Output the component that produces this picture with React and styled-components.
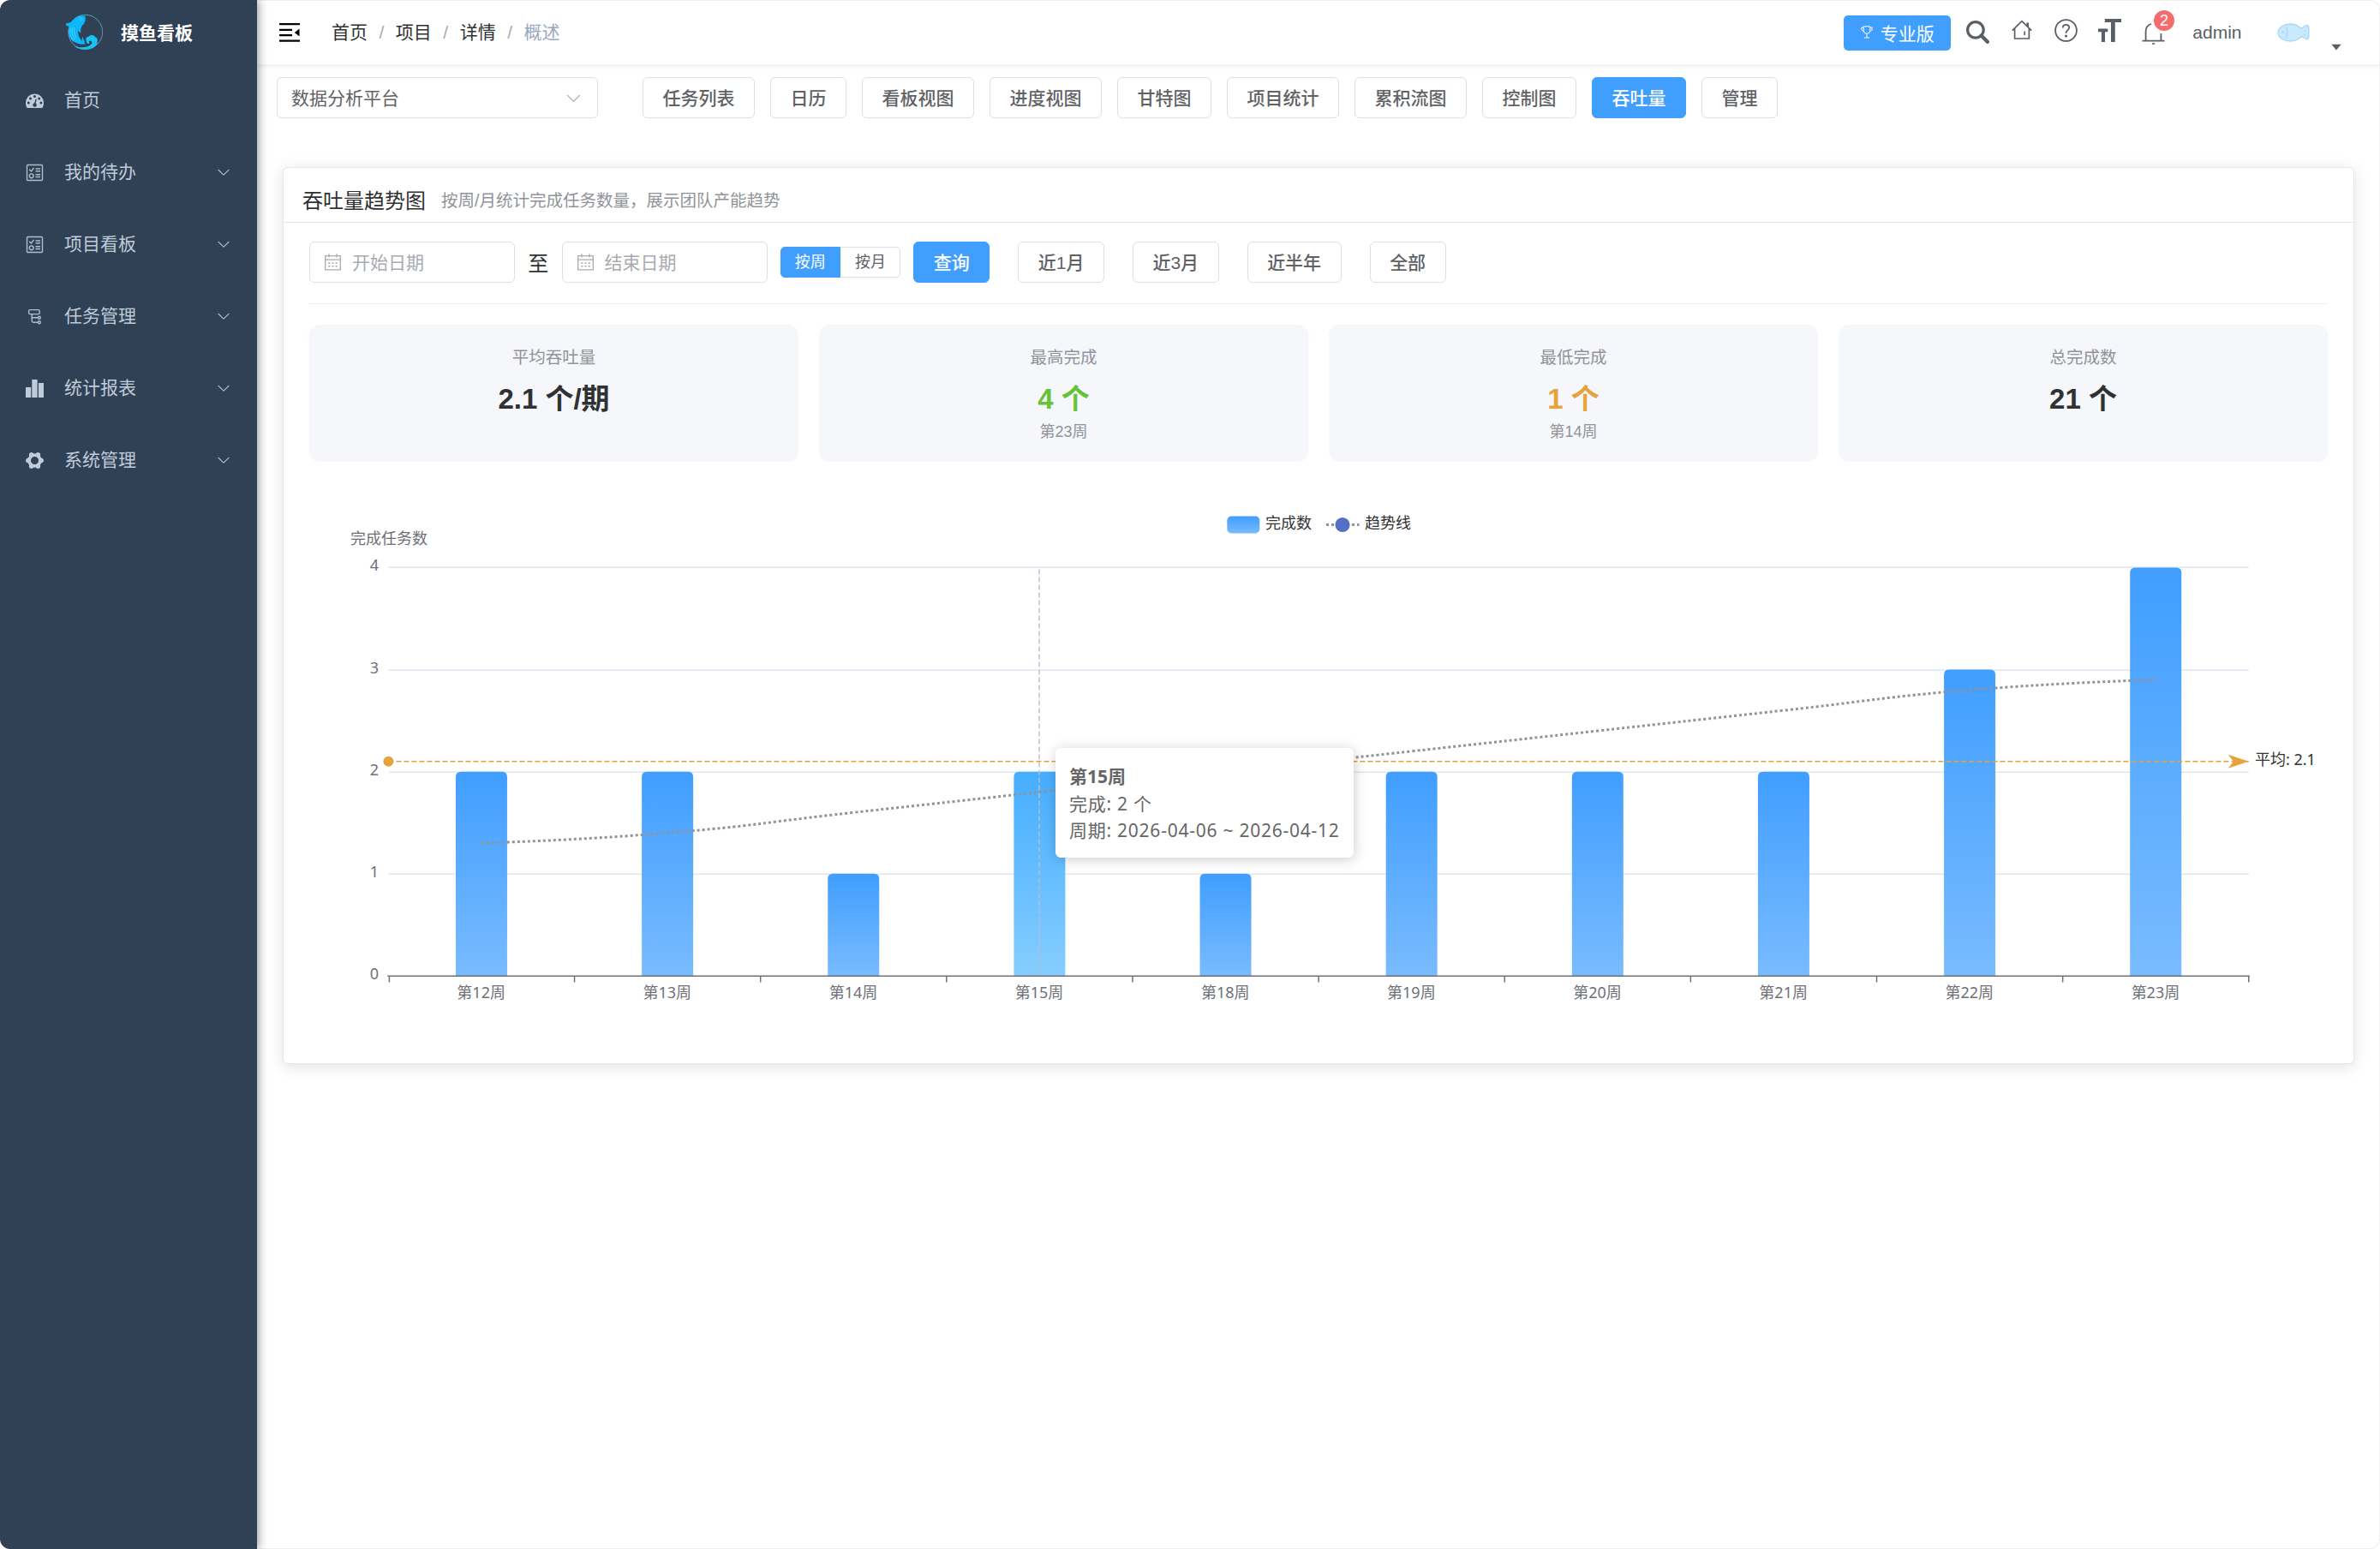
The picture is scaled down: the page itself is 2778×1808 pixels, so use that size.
import React from 'react'
import styled, { createGlobalStyle } from 'styled-components'

const GlobalStyle = createGlobalStyle`
  * {
    box-sizing: border-box;
  }
  body {
    margin: 0;
    background: #fff;
    font-family: "Liberation Sans", "Noto Sans CJK SC", sans-serif;
    font-size: 21px;
    color: #303133;
  }
`

const menus = [
  { name: '首页', icon: 'dashboard' },
  { name: '我的待办', icon: 'todo', children: true },
  { name: '项目看板', icon: 'todo', children: true },
  { name: '任务管理', icon: 'tree', children: true },
  { name: '统计报表', icon: 'chart', children: true },
  { name: '系统管理', icon: 'system', children: true },
]

const crumbs = ['首页', '项目', '详情', '概述']

const views = ['任务列表', '日历', '看板视图', '进度视图', '甘特图', '项目统计', '累积流图', '控制图', '吞吐量', '管理']

const ranges = ['近1月', '近3月', '近半年', '全部']

const stats = [
  { label: '平均吞吐量', value: '2.1 个/期' },
  { label: '最高完成', value: '4 个', sub: '第23周', color: '#67c23a' },
  { label: '最低完成', value: '1 个', sub: '第14周', color: '#e6a23c' },
  { label: '总完成数', value: '21 个' },
]

const weeks = [
  { week: '第12周', count: 2, trend: 1.3 },
  { week: '第13周', count: 2, trend: 1.4 },
  { week: '第14周', count: 1, trend: 1.6 },
  { week: '第15周', count: 2, trend: 1.8 },
  { week: '第18周', count: 1, trend: 2.0 },
  { week: '第19周', count: 2, trend: 2.2 },
  { week: '第20周', count: 2, trend: 2.4 },
  { week: '第21周', count: 2, trend: 2.6 },
  { week: '第22周', count: 3, trend: 2.8 },
  { week: '第23周', count: 4, trend: 2.9 },
]

/* ---------- icons ---------- */

const ArrowDown = ({ size = 18 }) => (
  <svg width={size} height={size} viewBox="0 0 1024 1024" fill="currentColor">
    <path d="M831.872 340.864 512 652.672 192.128 340.864a30.592 30.592 0 0 0-42.752 0 29.12 29.12 0 0 0 0 41.6L489.664 714.24a32 32 0 0 0 44.672 0l340.288-331.712a29.12 29.12 0 0 0 0-41.728 30.592 30.592 0 0 0-42.752 0z" />
  </svg>
)

const gearPath = (() => {
  const pts = []
  for (let i = 0; i < 120; i++) {
    const a = (i / 120) * Math.PI * 2
    const c = Math.cos(6 * a)
    const r = 9.3 + 1.2 * Math.sign(c) * Math.pow(Math.abs(c), 0.6)
    pts.push(`${(10.5 + r * Math.cos(a)).toFixed(2)} ${(10.5 + r * Math.sin(a)).toFixed(2)}`)
  }
  return `M${pts.join('L')}ZM10.5 6a4.5 4.5 0 1 0 0 9a4.5 4.5 0 1 0 0-9Z`
})()

const MenuIcon = ({ name }) => (
  <svg width="21" height="21" viewBox="0 0 21 21" fill="currentColor">
    {name === 'dashboard' && (
      <>
        <path d="M1.6 19C.6 17.300 0 15.200 0 13A10.500 10.500 0 0 1 21 13C21 15.200 20.400 17.300 19.400 19Z" />
        <g fill="#304156">
          <circle cx="3.300" cy="13" r="1.500" />
          <circle cx="5.500" cy="7.900" r="1.500" />
          <circle cx="10.500" cy="5.600" r="1.500" />
          <circle cx="15.700" cy="7.900" r="1.500" />
          <circle cx="17.900" cy="13" r="1.500" />
          <path d="M11.600 8.500L12.800 8.800L11.700 13.500A2.300 2.300 0 1 1 10.200 13.200Z" />
        </g>
      </>
    )}
    {name === 'todo' && (
      <g fill="none" stroke="currentColor" strokeWidth="1.400" opacity=".9">
        <rect x="1.500" y="1.500" width="18" height="18" rx="1" />
        <path d="M4.200 6.800L6.400 9L9.500 5M11.500 6H17M11.500 8.800H17M11.500 12.700H17M11.500 15.500H17" />
        <circle cx="6.700" cy="14.300" r="2.400" />
      </g>
    )}
    {name === 'tree' && (
      <g fill="none" stroke="currentColor" strokeWidth="1.400" opacity=".9">
        <rect x="3.600" y="2.600" width="12.600" height="5" rx="1.600" />
        <path d="M7.200 7.600V15.500Q7.200 17.200 9 17.200H14.200M7.200 11.800H14.200" />
        <circle cx="15.800" cy="11.800" r="1.500" />
        <circle cx="15.800" cy="17.200" r="1.500" />
      </g>
    )}
    {name === 'chart' && <path d="M0 9H6.200V21H0ZM7.300 0H13.600V21H7.300ZM14.900 4H21V21H14.900Z" />}
    {name === 'system' && <path fillRule="evenodd" d={gearPath} />}
  </svg>
)

const FishLogo = () => (
  <svg width="45" height="43" viewBox="228 51 135 129">
    <defs>
      <linearGradient id="ring" x1="0" y1="0" x2="0" y2="1">
        <stop offset="0" stopColor="#4fb0a8" />
        <stop offset=".6" stopColor="#6f8fb8" />
        <stop offset="1" stopColor="#a58fd0" />
      </linearGradient>
    </defs>
    <circle cx="299" cy="115" r="60" fill="none" stroke="url(#ring)" strokeWidth="2.800" />
    <path
      d="M299 60C280 53 262 63 250 80L229 86C233 94 239 97 244 95C236 112 239 136 256 148C270 158 288 160 301 157C286 148 274 134 272 110L283 119C282 108 283 100 287 94C297 85 301 74 299 60Z"
      fill="#0ab7fb"
    />
    <path d="M246 100C243 118 247 134 258 144M253 100C250 116 254 132 264 142M260 100C258 114 261 126 268 136" fill="none" stroke="#7fdcff" strokeWidth="1.800" />
    <circle cx="283" cy="70" r="5.500" fill="none" stroke="#58cdfb" strokeWidth="2" />
    <path d="M290 132C284 142 286 152 297 156C298 150 292 142 290 132Z" fill="#0ab7fb" />
    <path
      d="M258 164C284 172 306 170 318 160C325 154 322 144 314 146C310 148 311 153 314 155C306 158 300 152 302 143C299 137 304 131 310 132C315 124 329 124 333 133C342 136 343 144 340 150C343 157 334 168 320 173C300 180 274 176 258 164Z"
      fill="#17c3f5"
    />
  </svg>
)

const Calendar = () => (
  <svg width="19" height="20" viewBox="0 0 19 20" fill="none" stroke="currentColor" strokeWidth="1.300">
    <path d="M.7 2.700H18.300V18.800H.7ZM.7 7.200H18.300M5 .3V4.600M14 .3V4.600" />
    <path d="M4.200 11H6.400M8.400 11H10.600M12.600 11H14.800M4.200 14.800H6.400M8.400 14.800H10.600M12.600 14.800H14.800" strokeWidth="1.500" />
  </svg>
)

const Hamburger = () => (
  <svg width="24" height="22" viewBox="0 0 24 22" fill="#000">
    <path d="M0 0H24V2.200H0ZM0 6.700H15V8.900H0ZM0 13H15V15.200H0ZM0 19.600H24V21.800H0ZM23.500 6.500V15.500L17.800 11Z" />
  </svg>
)

const Trophy = () => (
  <svg width="14" height="15" viewBox="0 0 14 15" fill="none" stroke="#fff" strokeWidth="1">
    <path d="M3.200 .8H10.800V5.500A3.800 3.800 0 0 1 3.200 5.500ZM3 2.200H.8V4.300Q.8 6 3.400 6.300M11 2.200H13.200V4.300Q13.200 6 10.600 6.300M7 9.500V13.800M3.800 14H10.200" />
  </svg>
)

const SearchIcon = () => (
  <svg width="27" height="27" viewBox="0 0 27 27" fill="none" stroke="#5a5e66">
    <circle cx="10.900" cy="10.900" r="9.300" strokeWidth="3.200" />
    <path d="M17.600 17.600L24.800 24.800" strokeWidth="4.300" strokeLinecap="round" />
  </svg>
)

const HomeIcon = () => (
  <svg width="24" height="24" viewBox="0 0 24 24" fill="none" stroke="#5a5e66" strokeWidth="1.700">
    <path d="M.8 12.600L12 1.600L23.200 12.600M3.600 10.500V22H20.400V10.500M15.200 13.500V18" />
    <path d="M18.700 3.500V8" strokeWidth="2.600" />
  </svg>
)

const QuestionIcon = () => (
  <svg width="27" height="27" viewBox="0 0 27 27" fill="none" stroke="#5a5e66" strokeWidth="1.800">
    <circle cx="13.500" cy="13.500" r="12.400" />
    <path d="M9.800 10.400C9.800 5.700 17.200 5.800 17.200 10.300C17.200 13.200 13.500 13.200 13.500 16.800" />
    <circle cx="13.500" cy="20" r=".7" />
  </svg>
)

const SizeIcon = () => (
  <svg width="27" height="27" viewBox="0 0 27 27" fill="#5a5e66">
    <path d="M7.800 0H27V4H19.800V27H15V4H7.800ZM0 11.500H11.300V15.300H8V27H3.900V15.300H0Z" />
  </svg>
)

const BellIcon = () => (
  <svg width="27" height="27" viewBox="0 0 27 27" fill="none" stroke="#5a5e66" strokeWidth="1.800">
    <path d="M.5 22.600H26.500M4.600 22.600V11.500A9 9 0 0 1 11 3M22.400 22.600V14" />
    <path d="M11.600 25.200H15.400L14.400 27H12.600Z" fill="#5a5e66" stroke="none" />
  </svg>
)

const FishAvatar = () => (
  <svg width="38" height="22" viewBox="0 0 38 22" fill="#c9eafd" stroke="#a9d9f7" strokeWidth="1.400">
    <path d="M1 11C1 5 8 1 15.500 1C21 1 25 3.500 28 6C31 6 31.500 3 34 2.800C37.500 2.500 37 6 36.800 11C37 17 37 19 34.500 18.500C31.500 18.200 31 16 28 16C25 18.700 21 21 15.500 21C8 21 1 17 1 11Z" />
    <path d="M10.500 4.500C12.300 9 12.300 13 10.500 17.500M32 8V10M32 12.500V14.500" fill="none" />
    <circle cx="6.500" cy="10.500" r=".6" />
  </svg>
)

/* ---------- chart ---------- */

const LEFT = 92.4
const RIGHT = 2263.8
const BASE = 576
const STEP = 119.15
const BAND = (RIGHT - LEFT) / weeks.length
const BAR = 60
const ACTIVE = 3

const xOf = (i) => LEFT + BAND * (i + 0.5)
const yOf = (v) => BASE - STEP * v

const smoothLine = () => {
  const p = weeks.map((d, i) => [xOf(i), yOf(d.trend)])
  let d = `M${p[0][0]} ${p[0][1]}`
  let cp = p[0]
  for (let i = 1; i < p.length; i++) {
    const prev = p[i - 1]
    const cur = p[i]
    const next = p[i + 1]
    let inCp = cur
    let outCp = cur
    if (next) {
      const vx = (next[0] - prev[0]) / 4
      const vy = (next[1] - prev[1]) / 4
      inCp = [cur[0] - vx, cur[1] - vy]
      outCp = [cur[0] + vx, cur[1] + vy]
    }
    d += `C${cp[0]} ${cp[1]} ${inCp[0]} ${inCp[1]} ${cur[0]} ${cur[1]}`
    cp = outCp
  }
  return d
}

const barPath = (i, count) => {
  const x = xOf(i) - BAR / 2
  const y = yOf(count)
  return `M${x} ${BASE}V${y + 6}Q${x} ${y} ${x + 6} ${y}H${x + BAR - 6}Q${x + BAR} ${y} ${x + BAR} ${y + 6}V${BASE}Z`
}

const ThroughputChart = () => (
  <ChartBox>
    <ChartSvg width="2356" height="660" viewBox="0 0 2356 660">
      <defs>
        <linearGradient id="bar" x1="0" y1="0" x2="0" y2="1">
          <stop offset="0" stopColor="#409eff" />
          <stop offset="1" stopColor="#79bbff" />
        </linearGradient>
        <linearGradient id="barActive" x1="0" y1="0" x2="0" y2="1">
          <stop offset="0" stopColor="#46adff" />
          <stop offset="1" stopColor="#85cdff" />
        </linearGradient>
      </defs>

      <rect x="1071.300" y="39.500" width="38" height="20" rx="5" fill="url(#bar)" />
      <text x="1116" y="54" fill="#333">完成数</text>
      <path d="M1187 49.500H1225.500" stroke="#909399" strokeWidth="3" strokeDasharray="3 3" />
      <circle cx="1206" cy="49.500" r="8.600" fill="#5470c6" />
      <text x="1232" y="54" fill="#333">趋势线</text>

      <text x="93" y="72" textAnchor="middle" fill="#6e7079">完成任务数</text>
      {[0, 1, 2, 3, 4].map((v) => (
        <g key={v}>
          {v > 0 && <path d={`M${LEFT} ${Math.round(yOf(v)) + 0.25}H${RIGHT}`} stroke="#e0e6f1" strokeWidth="1.500" />}
          <text x="81" y={yOf(v) + 4} textAnchor="end" fill="#6e7079">{v}</text>
        </g>
      ))}

      {weeks.map((d, i) => (
        <path key={d.week} d={barPath(i, d.count)} fill={i === ACTIVE ? 'url(#barActive)' : 'url(#bar)'} />
      ))}

      <path d={`M${LEFT - 1} ${BASE + 0.3}H${RIGHT + 1}`} stroke="#6e7079" strokeWidth="1.500" />
      {Array.from({ length: weeks.length + 1 }, (_, i) => (
        <path key={i} d={`M${LEFT + BAND * i + (i === 0 ? 1 : 0)} ${BASE}v7.500`} stroke="#6e7079" strokeWidth="1.500" />
      ))}
      {weeks.map((d, i) => (
        <text key={d.week} x={xOf(i) - 0.3} y="602" textAnchor="middle" fill="#6e7079">{d.week}</text>
      ))}

      <path d={smoothLine()} fill="none" stroke="#909399" strokeWidth="3" strokeDasharray="3 3" />

      <path d={`M${LEFT} 325.750H${RIGHT}`} stroke="#e6a23c" strokeWidth="1.500" strokeDasharray="6 3" />
      <circle cx={LEFT} cy={yOf(2.1)} r="6" fill="#e6a23c" />
      <path d={`M${RIGHT} ${yOf(2.1)}l-24 -8l6 8l-6 8Z`} fill="#e6a23c" />
      <text x="2271" y="329.500" fill="#333">平均: 2.1</text>

      <path d={`M${Math.round(xOf(ACTIVE))} ${yOf(4) + 2}V${BASE}`} stroke="#b9bec9" strokeOpacity=".7" strokeWidth="2" strokeDasharray="6 3" />
    </ChartSvg>
    <Tooltip>
      <b>第15周</b>
      <span>完成: 2 个</span>
      <span>周期: 2026-04-06 ~ 2026-04-12</span>
    </Tooltip>
  </ChartBox>
)

/* ---------- page ---------- */

function App() {
  return (
    <Page>
      <GlobalStyle />
      <Sidebar>
        <Brand>
          <FishLogo />
          <span>摸鱼看板</span>
        </Brand>
        {menus.map((m) => (
          <MenuItem key={m.name}>
            <MenuIcon name={m.icon} />
            <span>{m.name}</span>
            {m.children && <ArrowDown />}
          </MenuItem>
        ))}
      </Sidebar>

      <Main>
        <Header>
          <Hamburger />
          <Breadcrumb>
            {crumbs.map((c, i) => (
              <React.Fragment key={c}>
                {i > 0 && <i>/</i>}
                <Crumb $last={i === crumbs.length - 1}>{c}</Crumb>
              </React.Fragment>
            ))}
          </Breadcrumb>
          <ProButton><Trophy />专业版</ProButton>
          <Tools>
            <Tool $drop={0}><SearchIcon /></Tool>
            <Tool $drop={-2}><HomeIcon /></Tool>
            <Tool $drop={-2}><QuestionIcon /></Tool>
            <Tool $drop={-2}><SizeIcon /></Tool>
            <Tool $drop={1}><BellIcon /><Badge>2</Badge></Tool>
          </Tools>
          <UserName>admin</UserName>
          <FishAvatar />
          <Caret width="18" height="18" viewBox="0 0 1024 1024"><path d="m192 384 320 384 320-384z" /></Caret>
        </Header>

        <ViewBar>
          <ProjectSelect>
            <span>数据分析平台</span>
            <ArrowDown size={21} />
          </ProjectSelect>
          <ViewTabs>
            {views.map((v) => (
              <Button key={v} $primary={v === '吞吐量'}>{v}</Button>
            ))}
          </ViewTabs>
        </ViewBar>

        <Card>
          <CardHeader>
            <h3>吞吐量趋势图</h3>
            <p>按周/月统计完成任务数量，展示团队产能趋势</p>
          </CardHeader>
          <CardBody>
            <Filters>
              <DateInput><Calendar /><span>开始日期</span></DateInput>
              <To>至</To>
              <DateInput><Calendar /><span>结束日期</span></DateInput>
              <RadioGroup>
                <Radio $active>按周</Radio>
                <Radio>按月</Radio>
              </RadioGroup>
              <Button $primary>查询</Button>
              <RangeGroup>
                {ranges.map((r) => <Button key={r}>{r}</Button>)}
              </RangeGroup>
            </Filters>
            <StatGrid>
              {stats.map((s) => (
                <Stat key={s.label}>
                  <StatLabel>{s.label}</StatLabel>
                  <StatValue $color={s.color}>{s.value}</StatValue>
                  {s.sub && <StatSub>{s.sub}</StatSub>}
                </Stat>
              ))}
            </StatGrid>
            <ThroughputChart />
          </CardBody>
        </Card>
      </Main>
    </Page>
  )
}

const Page = styled.div`
  display: flex;
  width: 2778px;
  height: 1808px;
  overflow: hidden;
  border-radius: 12px;
  box-shadow: inset 0 0 0 1px #efeff1;
`

const Sidebar = styled.aside`
  width: 300px;
  flex: none;
  background: #304156;
  box-shadow: 3px 0 9px rgba(0, 21, 41, 0.35);
  z-index: 2;
`

const Brand = styled.div`
  height: 75px;
  padding: 0 0 0 76px;
  display: flex;
  align-items: center;
  gap: 20px;
  color: #fff;
  font-weight: bold;

  span {
    padding-bottom: 2px;
  }
`

const MenuItem = styled.div`
  height: 84px;
  padding: 0 30px;
  display: flex;
  align-items: center;
  color: #bfcbd9;

  span {
    flex: 1;
    margin-left: 24px;
    padding-bottom: 4px;
  }
`

const Main = styled.main`
  flex: 1;
  min-width: 0;
`

const Header = styled.header`
  height: 75px;
  padding: 0 42px 0 26px;
  display: flex;
  align-items: center;
  box-shadow: 0 1.5px 6px rgba(0, 21, 41, 0.08);
`

const Breadcrumb = styled.nav`
  display: flex;
  align-items: baseline;
  margin-left: 37px;
  padding-bottom: 3px;
  flex: 1;

  i {
    margin: 0 13.5px;
    font-style: normal;
    color: #a8abb2;
  }
`

const Crumb = styled.span`
  color: ${(p) => (p.$last ? '#97a8be' : '#303133')};
`

const ProButton = styled.button`
  width: 125px;
  height: 41px;
  border: none;
  border-radius: 5px;
  background: #409eff;
  color: #fff;
  font: inherit;
  display: flex;
  align-items: center;
  justify-content: center;
  gap: 9px;
  margin-top: 2px;
  padding: 0 0 2px;
`

const Tools = styled.div`
  display: flex;
  margin-left: 6px;
`

const Tool = styled.div`
  width: 51.2px;
  height: 27px;
  margin-top: ${(p) => p.$drop}px;
  display: flex;
  align-items: center;
  justify-content: center;
  position: relative;
`

const Badge = styled.span`
  position: absolute;
  left: 26px;
  top: -13px;
  width: 24px;
  height: 24px;
  border-radius: 50%;
  background: #f56c6c;
  color: #fff;
  font-size: 18px;
  line-height: 24px;
  text-align: center;
`

const UserName = styled.span`
  margin: 0 41px 0 20px;
  color: #5a5e66;
`

const Caret = styled.svg`
  margin: 32px 0 0 22.5px;
  fill: #5a5e66;
`

const ViewBar = styled.div`
  display: flex;
  padding: 15px 23px 0;
`

const ProjectSelect = styled.div`
  width: 375px;
  height: 48px;
  padding: 0 17px 0 16px;
  border: 1px solid #dcdfe6;
  border-radius: 6px;
  display: flex;
  align-items: center;
  justify-content: space-between;
  color: #606266;

  span {
    padding-bottom: 3px;
  }
  svg {
    color: #a8abb2;
  }
`

const ViewTabs = styled.div`
  display: flex;
  gap: 18px;
  margin-left: 52px;
`

const Button = styled.button`
  height: 48px;
  padding: 0 22.5px 3px;
  border: 1px solid ${(p) => (p.$primary ? '#409eff' : '#dcdfe6')};
  border-radius: 6px;
  background: ${(p) => (p.$primary ? '#409eff' : '#fff')};
  color: ${(p) => (p.$primary ? '#fff' : '#606266')};
  font: inherit;
  font-weight: 500;
  white-space: nowrap;
`

const Card = styled.section`
  margin: 57px 30px 0;
  height: 1047px;
  border: 1px solid #e4e7ed;
  border-radius: 6px;
  background: #fff;
  box-shadow: 0 3px 18px rgba(0, 0, 0, 0.12);
`

const CardHeader = styled.div`
  height: 64px;
  padding: 10px 22px 0;
  display: flex;
  align-items: center;
  gap: 18px;
  border-bottom: 1px solid #e4e7ed;

  h3 {
    margin: 0;
    font-size: 24px;
    font-weight: 400;
  }
  p {
    margin: 0;
    font-size: 19.5px;
    color: #909399;
  }
`

const CardBody = styled.div`
  padding: 22px 30px;
`

const Filters = styled.div`
  display: flex;
  align-items: center;
  padding-bottom: 24px;
  border-bottom: 1px solid #ebeef5;
`

const DateInput = styled.div`
  width: 240px;
  height: 48px;
  padding: 0 17px;
  border: 1px solid #dcdfe6;
  border-radius: 6px;
  display: flex;
  align-items: center;
  gap: 13px;
  color: #a8abb2;

  span {
    padding-bottom: 2px;
  }
`

const To = styled.span`
  width: 54.5px;
  padding-bottom: 2px;
  text-align: center;
  font-size: 24px;
`

const RadioGroup = styled.div`
  display: flex;
  margin: 0 15px;
`

const Radio = styled.span`
  height: 36px;
  padding: 0 16.2px;
  border: 1px solid ${(p) => (p.$active ? '#409eff' : '#dcdfe6')};
  border-radius: ${(p) => (p.$active ? '5px 0 0 5px' : '0 5px 5px 0')};
  border-left-color: ${(p) => (p.$active ? '#409eff' : 'transparent')};
  background: ${(p) => (p.$active ? '#409eff' : '#fff')};
  color: ${(p) => (p.$active ? '#fff' : '#606266')};
  font-size: 18px;
  line-height: 35px;
`

const RangeGroup = styled.div`
  display: flex;
  gap: 33px;
  margin-left: 33px;
`

const StatGrid = styled.div`
  display: grid;
  grid-template-columns: repeat(4, 1fr);
  gap: 24px;
  margin-top: 24px;
`

const Stat = styled.div`
  height: 160px;
  padding-top: 24px;
  border-radius: 12px;
  background: #f5f7fb;
  text-align: center;
`

const StatLabel = styled.div`
  font-size: 19.5px;
  line-height: 28px;
  color: #909399;
`

const StatValue = styled.div`
  margin-top: 15px;
  font-size: 33px;
  line-height: 40px;
  font-weight: bold;
  color: ${(p) => p.$color || '#303133'};
`

const StatSub = styled.div`
  margin-top: 5px;
  font-size: 18px;
  line-height: 26px;
  color: #909399;
`

const ChartBox = styled.div`
  position: relative;
  margin-top: 24px;
`

const ChartSvg = styled.svg`
  display: block;

  text {
    font-family: "Noto Sans", "Noto Sans CJK SC", sans-serif;
    font-size: 18px;
  }
`

const Tooltip = styled.div`
  position: absolute;
  left: 871px;
  top: 310px;
  width: 348px;
  height: 128px;
  padding: 17px 15px;
  border: 1px solid #fff;
  border-radius: 6px;
  background: #fff;
  box-shadow: 1px 2px 15px rgba(0, 0, 0, 0.2);
  display: flex;
  flex-direction: column;
  font-family: "Noto Sans", "Noto Sans CJK SC", sans-serif;
  font-size: 21px;
  line-height: 31.5px;
  color: #666;
  white-space: nowrap;

  span {
    letter-spacing: 0.75px;
  }
`

export default App
